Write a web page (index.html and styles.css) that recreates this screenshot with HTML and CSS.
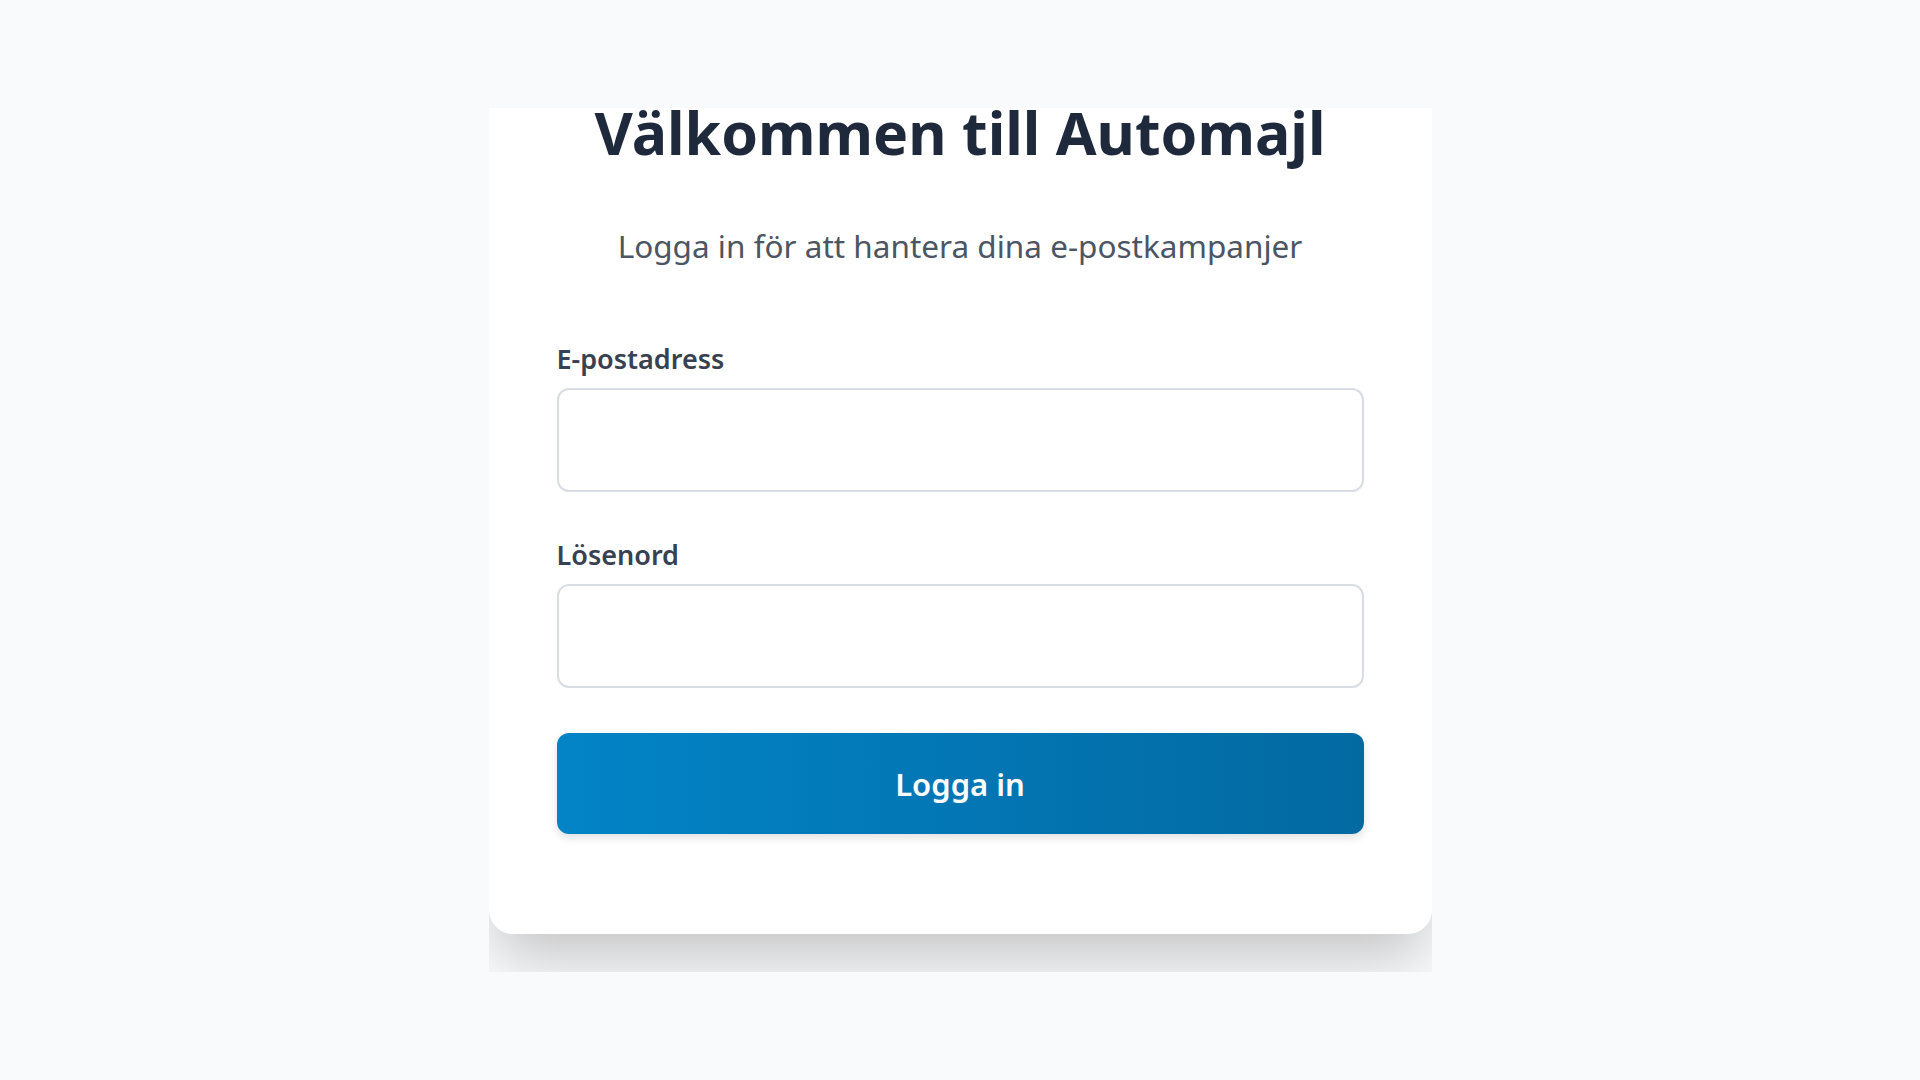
FILE: index.html
```html
<!DOCTYPE html>
<html lang="sv">
<head>
    <meta charset="UTF-8">
    <meta name="viewport" content="width=device-width, initial-scale=1.0">
    <title>Automajl - Logga in</title>
    <link rel="stylesheet" href="styles.css">
</head>
<body>

    <div class="page">
        <div class="viewport">
            <div class="login-card">
                <h1 class="title">Välkommen till Automajl</h1>
                <p class="subtitle">Logga in för att hantera dina e-postkampanjer</p>

                <form class="login-form" onsubmit="return false;">
                    <div class="field">
                        <label for="email">E-postadress</label>
                        <input type="email" id="email" name="email">
                    </div>
                    <div class="field">
                        <label for="password">Lösenord</label>
                        <input type="password" id="password" name="password">
                    </div>
                    <button type="submit" class="login-button">Logga in</button>
                </form>
            </div>
        </div>
    </div>

</body>
</html>
```

FILE: styles.css
```css
body {
    margin: 0;
    background-color: #f9fafb;
    font-family: "Noto Sans", "Open Sans", sans-serif;
}

.page {
    display: flex;
    justify-content: center;
    padding-top: 108px;
}

/* the card is scrolled a little, its top is out of view */
.viewport {
    width: 943px;
    height: 864px;
    overflow: hidden;
}

.login-card {
    margin-top: -59px;
    background-color: #ffffff;
    border-radius: 24px;
    padding: 48px 68px 100px;
    box-shadow: 0 30px 60px -8px rgba(0, 0, 0, 0.22);
}

.title {
    margin: 0;
    text-align: center;
    font-size: 59px;
    line-height: 71px;
    font-weight: 700;
    color: #1e293b;
    white-space: nowrap;
}

.subtitle {
    margin: 56px 0 0;
    text-align: center;
    font-size: 31.5px;
    line-height: 44px;
    color: #4b5563;
}

.login-form {
    margin-top: 73px;
    display: flex;
    flex-direction: column;
    gap: 45px;
}

.field {
    display: flex;
    flex-direction: column;
    gap: 11px;
}

.field label {
    font-size: 27px;
    line-height: 36px;
    font-weight: 600;
    color: #374151;
}

.field input {
    height: 104px;
    box-sizing: border-box;
    border: 2px solid #d9dde3;
    border-radius: 12px;
    padding: 0 24px;
    font-size: 24px;
    font-family: inherit;
    background-color: #ffffff;
}

.login-button {
    height: 101px;
    border: none;
    border-radius: 12px;
    background: linear-gradient(to right, #0284c7, #0369a1);
    color: #ffffff;
    font-family: inherit;
    font-size: 31px;
    font-weight: 600;
    cursor: pointer;
    box-shadow: 0 4px 8px rgba(0, 0, 0, 0.12);
}
```
